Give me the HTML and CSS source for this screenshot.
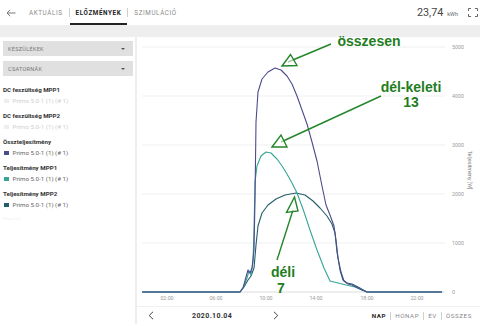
FILE: index.html
```html
<!DOCTYPE html>
<html lang="hu">
<head>
<meta charset="utf-8">
<title>Előzmények</title>
<link rel="stylesheet" href="styles.css">
</head>
<body>
<header class="topbar">
  <nav class="nav">
    <svg class="back" viewBox="0 0 10 8"><path d="M9.5 4H1M4.2 0.8L1 4l3.2 3.2" fill="none" stroke="#777" stroke-width="1"/></svg>
    <span class="tab">AKTUÁLIS</span>
    <span class="sep"></span>
    <span class="tab active">ELŐZMÉNYEK</span>
    <span class="sep"></span>
    <span class="tab">SZIMULÁCIÓ</span>
  </nav>
  <div class="total">
    <span class="value">23,74</span><span class="unit">kWh</span>
    <svg class="fullscreen" viewBox="0 0 10 9"><path d="M0.5 3V0.5H3M7 0.5h2.5V3M9.5 6v2.5H7M3 8.5H0.5V6" fill="none" stroke="#666" stroke-width="1"/></svg>
  </div>
</header>
<main class="content">
  <aside class="sidebar">
    <div class="select"><span>KÉSZÜLÉKEK</span><span class="caret"></span></div>
    <div class="select"><span>CSATORNÁK</span><span class="caret"></span></div>
    <div class="legend">
      <div class="group">
        <div class="group-title">DC feszültség MPP1</div>
        <div class="item off"><span class="swatch"></span>Primo 5.0-1 (1) (# 1)</div>
      </div>
      <div class="group">
        <div class="group-title">DC feszültség MPP2</div>
        <div class="item off"><span class="swatch"></span>Primo 5.0-1 (1) (# 1)</div>
      </div>
      <div class="group">
        <div class="group-title">Összteljesítmény</div>
        <div class="item"><span class="swatch total"></span>Primo 5.0-1 (1) (# 1)</div>
      </div>
      <div class="group">
        <div class="group-title">Teljesítmény MPP1</div>
        <div class="item"><span class="swatch mpp1"></span>Primo 5.0-1 (1) (# 1)</div>
      </div>
      <div class="group">
        <div class="group-title">Teljesítmény MPP2</div>
        <div class="item"><span class="swatch mpp2"></span>Primo 5.0-1 (1) (# 1)</div>
      </div>
      <div class="faint">Primo 5.0</div>
    </div>
  </aside>
  <section class="card">
    <svg class="chart" viewBox="137 37 343 269" width="343" height="269">
      <g class="grid">
        <line x1="142" y1="47" x2="445" y2="47"/>
        <line x1="142" y1="96" x2="445" y2="96"/>
        <line x1="142" y1="145" x2="445" y2="145"/>
        <line x1="142" y1="194" x2="445" y2="194"/>
        <line x1="142" y1="243" x2="445" y2="243"/>
        <line x1="142" y1="292" x2="445" y2="292" class="base"/>
      </g>
      <g class="ylab">
        <text x="452" y="49">5000</text>
        <text x="452" y="98">4000</text>
        <text x="452" y="147">3000</text>
        <text x="452" y="196">2000</text>
        <text x="452" y="245">1000</text>
        <text x="452" y="294">0</text>
      </g>
      <text class="ytitle" transform="translate(468 170) rotate(90)">Teljesítmény [W]</text>
      <g class="xlab">
        <text x="167" y="300">02:00</text>
        <text x="216" y="300">06:00</text>
        <text x="266" y="300">10:00</text>
        <text x="316" y="300">14:00</text>
        <text x="367" y="300">18:00</text>
        <text x="417" y="300">22:00</text>
      </g>
      <polyline class="line l-mpp2" points="142,292 240,292 244,287 248,280 251,276 254,268 256,245 258,226 262,213 268,205 276,199 285,195 296,193 305,195 313,201 320,208 327,216 332,224 335,233 337,252 340,270 343,280 347,283 352,284 358,287 367,292 442,292"/>
      <polyline class="line l-mpp1" points="142,292 240,292 244,286 247,278 249,271 251,275 253,262 254,230 255,182 257,166 261,156 266,152 271,153 277,159 282,166 287,174 292,183 297,193 303,209 310,230 317,250 324,268 330,281 338,283 346,285 355,287 362,290 367,292 442,292"/>
      <polyline class="line l-total" points="142,292 240,292 243,288 246,277 248,270 250,273 252,268 254,250 255,200 256,122 258,92 262,79 268,72 275,68 281,70 287,76 292,84 297,96 302,110 307,124 312,142 317,161 322,186 326,205 330,215 334,226 336,240 338,258 341,272 344,281 348,284 352,285 356,287 362,290 367,292 442,292"/>
      <g class="arrow">
        <line x1="331" y1="44" x2="288" y2="62"/>
        <polygon points="282,66 290.5,54.5 297,65.5"/>
        <line x1="381" y1="96" x2="281" y2="142"/>
        <polygon points="272,147 281,135 287,147"/>
        <line x1="277" y1="260" x2="293" y2="210"/>
        <polygon points="294.5,197 286.5,212.5 298,211"/>
      </g>
      <g class="note">
        <text x="369" y="46">összesen</text>
        <text x="411" y="92">dél-keleti</text>
        <text x="411" y="107">13</text>
        <text x="283" y="277">déli</text>
        <text x="281" y="293">7</text>
      </g>
    </svg>
    <div class="datebar">
      <div class="pager">
        <svg class="chev" viewBox="0 0 6 9"><path d="M5 0.8L1.2 4.5L5 8.2" fill="none" stroke="#444" stroke-width="1"/></svg>
        <span class="date">2020.10.04</span>
        <svg class="chev" viewBox="0 0 6 9"><path d="M1 0.8L4.8 4.5L1 8.2" fill="none" stroke="#444" stroke-width="1"/></svg>
      </div>
      <div class="periods">
        <span class="period active">NAP</span>
        <span class="psep"></span>
        <span class="period">HÓNAP</span>
        <span class="psep"></span>
        <span class="period">ÉV</span>
        <span class="psep"></span>
        <span class="period">ÖSSZES</span>
      </div>
    </div>
  </section>
</main>
</body>
</html>
```

FILE: styles.css
```css
* { box-sizing: border-box; margin: 0; padding: 0; }
html, body { width: 480px; height: 324px; overflow: hidden; }
body {
  background: #eeeeee;
  font-family: Roboto, "Liberation Sans", sans-serif;
  color: #333;
}

.topbar {
  height: 25px;
  background: #fff;
  display: flex;
  align-items: center;
  justify-content: space-between;
  padding: 0 2px 0 6px;
}
.nav { display: flex; align-items: stretch; height: 100%; }
.back { width: 10px; height: 8px; align-self: center; margin-right: 7px; }
.tab {
  display: flex;
  align-items: center;
  padding: 0 6px;
  font-size: 6.3px;
  letter-spacing: 0.6px;
  color: #8a8a8a;
  border-top: 2px solid transparent;
  border-bottom: 2px solid transparent;
}
.tab.active { color: #222; font-weight: 700; border-bottom-color: #222; }
.sep { width: 1px; height: 9px; background: #cfcfcf; align-self: center; }

.total { display: flex; align-items: center; }
.value { font-size: 10.8px; color: #444; }
.unit { font-size: 5.5px; color: #666; margin-left: 4px; margin-top: 3px; }
.fullscreen { width: 10px; height: 9px; margin-left: 10px; }

.content {
  display: grid;
  grid-template-columns: 135px 1fr;
  column-gap: 2px;
  margin-top: 12px;
  height: 287px;
}
.sidebar { background: #fff; padding: 4px 2px 0 3px; }
.select {
  height: 15px;
  background: #e0e0e0;
  display: flex;
  align-items: center;
  justify-content: space-between;
  padding: 0 8px 0 5px;
  font-size: 5.5px;
  letter-spacing: 0.3px;
  color: #777;
  margin-bottom: 5px;
}
.caret {
  width: 0; height: 0;
  border-left: 2px solid transparent;
  border-right: 2px solid transparent;
  border-top: 2.5px solid #555;
}
.legend { margin-top: 8px; display: flex; flex-direction: column; gap: 4px; }
.group-title {
  height: 12px;
  line-height: 12px;
  font-size: 6.2px;
  font-weight: 700;
  color: #333;
}
.item {
  height: 10px;
  display: flex;
  align-items: center;
  font-size: 6.2px;
  color: #666;
}
.item.off { color: #cfcfcf; }
.swatch { width: 4.5px; height: 4.5px; margin: 0 4px 0 1px; background: #eee; }
.swatch.total { background: #4b4c8e; }
.swatch.mpp1 { background: #36a594; }
.swatch.mpp2 { background: #245d6b; }
.faint { font-size: 4px; color: #f1f1f1; margin-top: 2px; }

.card { background: #fff; display: flex; flex-direction: column; }
.chart { display: block; overflow: visible; }
.grid line { stroke: #efefef; stroke-width: 1; }
.grid line.base { stroke: #dcdcdc; }
.ylab text, .xlab text { font-size: 5.3px; fill: #9a9a9a; font-family: Roboto, "Liberation Sans", sans-serif; }
.xlab text { text-anchor: middle; }
.ytitle { font-size: 5.3px; fill: #777; text-anchor: middle; font-family: Roboto, "Liberation Sans", sans-serif; }
.line { fill: none; stroke-width: 1.1; stroke-linejoin: round; }
.l-total { stroke: #4b4c8e; }
.l-mpp1 { stroke: #36a594; }
.l-mpp2 { stroke: #245d6b; }
.arrow line, .arrow polygon { stroke: #24862a; stroke-width: 1.4; }
.arrow polygon { fill: #fff; fill-opacity: 0.6; stroke-linejoin: miter; }
.note text {
  font-family: "Liberation Sans", Arial, sans-serif;
  font-weight: 700;
  font-size: 14px;
  fill: #1f7d22;
  text-anchor: middle;
}

.datebar {
  height: 18px;
  border-top: 1px solid #f0f0f0;
  display: flex;
  align-items: center;
  justify-content: space-between;
  padding: 0 8px 0 11px;
}
.pager { display: flex; align-items: center; }
.chev { width: 6px; height: 9px; }
.date {
  font-size: 7px;
  font-weight: 700;
  letter-spacing: 0.4px;
  color: #333;
  margin: 0 41px 0 38px;
}
.periods { display: flex; align-items: center; }
.period { font-size: 6.2px; letter-spacing: 0.6px; color: #888; padding: 0 4px; }
.period:last-child { padding-right: 0; }
.period.active { color: #222; font-weight: 700; }
.psep { width: 1px; height: 8px; background: #d0d0d0; }
```
